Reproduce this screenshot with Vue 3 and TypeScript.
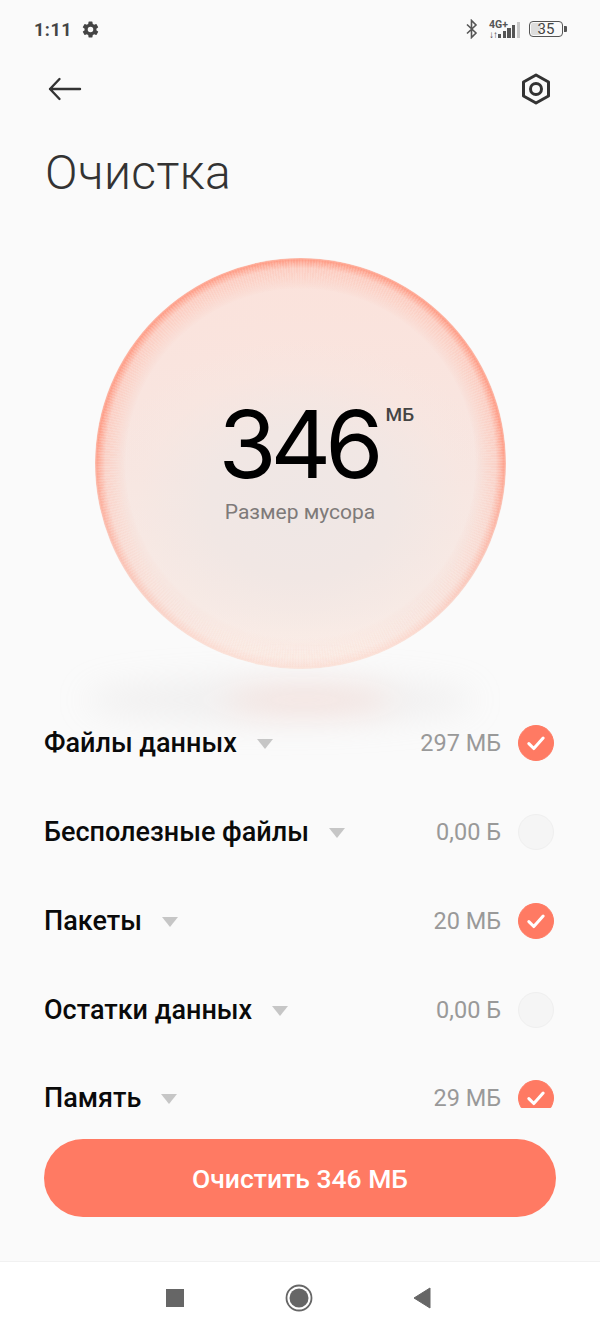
<script setup lang="ts">
interface Row { name: string; size: string; on: boolean }
const rows: Row[] = [
  { name: 'Файлы данных', size: '297 МБ', on: true },
  { name: 'Бесполезные файлы', size: '0,00 Б', on: false },
  { name: 'Пакеты', size: '20 МБ', on: true },
  { name: 'Остатки данных', size: '0,00 Б', on: false },
  { name: 'Память', size: '29 МБ', on: true },
]
const bars: number[] = [4, 7, 10, 13, 16]
</script>

<template>
  <div class="screen">
    <div class="status">
      <div class="status-left">
        <span class="time">1:11</span>
        <svg class="gear" viewBox="0 0 24 24" width="19" height="19"><path fill="#444" fill-rule="evenodd" d="M19.4 13c.04-.33.1-.66.1-1s-.06-.67-.1-1l2.1-1.65c.2-.15.25-.42.13-.64l-2-3.46c-.12-.22-.39-.3-.61-.22l-2.49 1c-.52-.4-1.08-.73-1.69-.98l-.38-2.65A.5.5 0 0 0 14 2h-4a.5.5 0 0 0-.49.42l-.38 2.65c-.61.25-1.17.59-1.69.98l-2.49-1a.5.5 0 0 0-.61.22l-2 3.46c-.13.22-.07.49.12.64L4.57 11c-.04.33-.07.66-.07 1s.03.67.07 1l-2.11 1.65c-.19.15-.25.42-.12.64l2 3.46c.12.22.39.3.61.22l2.49-1c.52.4 1.08.73 1.69.98l.38 2.65c.03.24.24.42.49.42h4c.25 0 .46-.18.49-.42l.38-2.65c.61-.25 1.17-.59 1.69-.98l2.49 1c.22.08.49 0 .61-.22l2-3.46c.12-.22.07-.49-.13-.64L19.4 13zM12 15.5a3.5 3.5 0 1 1 0-7 3.5 3.5 0 0 1 0 7z"/></svg>
      </div>
      <div class="status-right">
        <svg class="bt" viewBox="0 0 14 20" width="14" height="20"><path fill="none" stroke="#555" stroke-width="1.6" d="M2 5.5 11 14l-4.500 4.500V1.500L11 6 2 14.500"/></svg>
        <div class="net">
          <div class="net-labels">
            <span class="net-type">4G+</span>
            <span class="net-arrows">↓↑</span>
          </div>
          <div class="bars">
            <i v-for="(h, i) in bars" :key="i" class="bar" :class="{ dim: i === 4 }" :style="{ height: h + 'px' }"></i>
          </div>
        </div>
        <div class="battery">
          <div class="battery-body"><i class="battery-fill"></i><span class="battery-num">35</span></div>
          <i class="battery-tip"></i>
        </div>
      </div>
    </div>

    <div class="header">
      <svg viewBox="0 0 34 24" width="34" height="24"><path fill="none" stroke="#333" stroke-width="2.4" stroke-linecap="round" stroke-linejoin="round" d="M32 12H2M11.500 2 2 12l9.500 10"/></svg>
      <svg viewBox="0 0 30 32" width="30" height="32"><path fill="none" stroke="#333" stroke-width="3" stroke-linejoin="round" d="M15 2 27.500 9v14L15 30 2.500 23V9z"/><circle cx="15" cy="16" r="5.500" fill="none" stroke="#333" stroke-width="3"/></svg>
    </div>

    <h1 class="title">Очистка</h1>

    <div class="orb-area">
      <div class="orb">
        <div class="amount">
          <span class="number">346</span>
          <span class="unit">МБ</span>
        </div>
        <div class="caption">Размер мусора</div>
      </div>
      <div class="shadow"><i class="shadow-core"></i></div>
    </div>

    <div class="list">
      <div v-for="row in rows" :key="row.name" class="row">
        <span class="name">{{ row.name }}</span>
        <i class="caret"></i>
        <span class="size">{{ row.size }}</span>
        <span class="check" :class="{ on: row.on }">
          <svg v-if="row.on" viewBox="0 0 20 20" width="22" height="22"><path fill="none" stroke="#fff" stroke-width="2.800" stroke-linecap="round" stroke-linejoin="round" d="M3.500 10.500 8 15l8.500-9.500"/></svg>
        </span>
      </div>
    </div>

    <div class="action">
      <button class="clean">Очистить 346 МБ</button>
    </div>

    <div class="nav">
      <i class="nav-square"></i>
      <svg viewBox="0 0 28 28" width="28" height="28"><circle cx="14" cy="14" r="12.500" fill="none" stroke="#666" stroke-width="1.800"/><circle cx="14" cy="14" r="9.500" fill="#666"/></svg>
      <svg viewBox="0 0 18 22" width="18" height="22"><path fill="#666" stroke="#666" stroke-width="1" stroke-linejoin="round" d="M17 1v20L1 11z"/></svg>
    </div>
  </div>
</template>

<style>
html, body { margin: 0; background: #fafafa; }
</style>

<style scoped>
.screen {
  width: 600px;
  height: 1333px;
  background: #fafafa;
  font-family: Roboto, "Noto Sans", sans-serif;
  display: flex;
  flex-direction: column;
  overflow: hidden;
}
.status {
  height: 58px;
  box-sizing: border-box;
  padding: 0 33px 0 34px;
  display: flex;
  justify-content: space-between;
  align-items: center;
  flex: none;
}
.status-left { display: flex; align-items: center; gap: 9px; }
.time { font-size: 18px; font-weight: 700; color: #444; letter-spacing: .5px; }
.status-right { display: flex; align-items: center; }
.bt { margin-right: 10px; }
.net { display: flex; align-items: flex-end; margin-right: 9px; }
.net-labels { display: flex; flex-direction: column; width: 9px; white-space: nowrap; }
.net-type { font-size: 10.500px; font-weight: 700; line-height: 10px; color: #555; margin-bottom: 1px; }
.net-arrows { font-size: 10px; font-weight: 700; line-height: 7px; color: #444; letter-spacing: -1px; }
.bars { display: flex; align-items: flex-end; gap: 1.500px; }
.bar { display: block; width: 3.200px; background: #555; }
.bar.dim { background: #c8c8c8; }
.battery { display: flex; align-items: center; gap: 1px; }
.battery-body {
  width: 34px;
  height: 16px;
  box-sizing: border-box;
  border: 1.500px solid #555;
  border-radius: 4px;
  position: relative;
  display: flex;
  align-items: center;
  justify-content: center;
}
.battery-fill { position: absolute; left: 1px; top: 1px; bottom: 1px; width: 32%; background: #ddd; border-radius: 2px; }
.battery-num { position: relative; font-size: 15px; color: #444; line-height: 14px; }
.battery-tip { width: 3px; height: 6px; background: #555; border-radius: 0 1px 1px 0; }

.header {
  height: 62px;
  box-sizing: border-box;
  padding: 0 49px 0 48px;
  display: flex;
  justify-content: space-between;
  align-items: center;
  flex: none;
}
.title {
  margin: 0;
  padding: 19px 0 6px 45px;
  font-size: 48px;
  font-weight: 300;
  line-height: 68px;
  color: #333;
  flex: none;
  letter-spacing: .4px;
}
.orb-area {
  height: 486px;
  flex: none;
  box-sizing: border-box;
  padding-top: 45px;
  position: relative;
  display: flex;
  justify-content: center;
}
.orb {
  width: 411px;
  height: 411px;
  border-radius: 50%;
  position: relative;
  display: flex;
  flex-direction: column;
  align-items: center;
  background:
    radial-gradient(closest-side at 50% 60%, #efe7e5 0%, #f1e7e4 45%, rgba(246,231,226,.4) 80%, rgba(246,231,226,0) 100%),
    linear-gradient(to bottom, #fbe2db 0%, #f8e6e1 50%, #f8ece7 85%, #fdf1ea 100%);
}
.orb::before {
  content: "";
  position: absolute;
  inset: 0;
  border-radius: 50%;
  background:
    radial-gradient(closest-side, rgba(255,150,125,0) 85%, rgba(255,170,148,.25) 91%, rgba(255,170,150,.38) 95%, rgba(255,145,120,.85) 99%, rgba(255,150,125,.5) 100%);
  -webkit-mask-image: linear-gradient(to bottom, #000 0%, #000 45%, rgba(0,0,0,.3) 88%, rgba(0,0,0,.16) 100%);
  mask-image: linear-gradient(to bottom, #000 0%, #000 45%, rgba(0,0,0,.3) 88%, rgba(0,0,0,.16) 100%);
}
.orb::after {
  content: "";
  position: absolute;
  inset: 0;
  border-radius: 50%;
  background: repeating-conic-gradient(rgba(255,255,255,.14) 0 .4deg, rgba(255,255,255,0) .4deg .8deg);
  -webkit-mask-image: radial-gradient(closest-side, transparent 86%, #000 91%, #000 98%, transparent 100%);
  mask-image: radial-gradient(closest-side, transparent 86%, #000 91%, #000 98%, transparent 100%);
}
.amount {
  position: relative;
  z-index: 1;
  margin-top: 137px;
  height: 98px;
  display: flex;
  justify-content: center;
}
.number {
  font-family: Inter, Roboto, sans-serif;
  font-size: 94px;
  font-weight: 400;
  line-height: 98px;
  color: #000;
  letter-spacing: -6px;
  margin-right: 4px;
}
.unit {
  position: absolute;
  left: 100%;
  top: 10px;
  margin-left: 4px;
  font-size: 19px;
  font-weight: 500;
  line-height: 20px;
  color: #444;
}
.caption {
  position: relative;
  z-index: 1;
  margin-top: 6px;
  font-size: 21px;
  line-height: 26px;
  color: #7e7a79;
}
.shadow {
  position: absolute;
  left: 85px;
  top: 465px;
  width: 390px;
  height: 44px;
  border-radius: 50%;
  background: rgba(205,200,200,.2);
  filter: blur(16px);
  display: flex;
  justify-content: center;
  align-items: center;
}
.shadow-core { width: 170px; height: 22px; border-radius: 50%; background: rgba(250,200,188,.45); margin-left: 55px; }

.list {
  position: relative;
  flex: none;
  height: 409px;
  overflow: hidden;
  padding: 0 46px 0 44px;
}
.row {
  height: 88.750px;
  display: flex;
  align-items: center;
}
.row:last-child {
  height: 20px;
  margin-top: 34.400px;
}
.name { font-size: 27px; font-weight: 500; color: #0a0a0a; line-height: 20px; }
.caret {
  margin-left: 20px;
  width: 0;
  height: 0;
  border-left: 8px solid transparent;
  border-right: 8px solid transparent;
  border-top: 10px solid #c6c6c6;
  margin-top: 2px;
}
.size { margin-left: auto; font-size: 23.500px; color: #999; line-height: 20px; }
.check {
  margin-left: 17px;
  width: 36px;
  height: 36px;
  flex: none;
  border-radius: 50%;
  box-sizing: border-box;
  background: #f5f5f5;
  border: 1px solid #efefef;
  display: flex;
  align-items: center;
  justify-content: center;
}
.check.on { background: #ff7a63; border-color: #ff7a63; }
.action { flex: none; padding: 31px 44px 0; }
.clean {
  display: block;
  width: 100%;
  height: 78px;
  border: none;
  border-radius: 39px;
  background: #ff7a63;
  color: #fff;
  font-family: Roboto, sans-serif;
  font-size: 26.500px;
  font-weight: 500;
}
.nav {
  margin-top: auto;
  height: 72px;
  flex: none;
  box-sizing: border-box;
  padding-right: 3px;
  background: #fff;
  border-top: 1px solid #f1f1f1;
  display: flex;
  align-items: center;
  justify-content: center;
  gap: 100.500px;
}
.nav-square { width: 18px; height: 18px; background: #666; }
</style>
